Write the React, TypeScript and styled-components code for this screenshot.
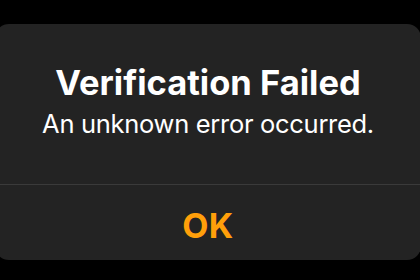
import React from "react";
import styled, { createGlobalStyle } from "styled-components";

const Global = createGlobalStyle`
  html, body { margin: 0; padding: 0; background: #000; }
  body { width: 420px; height: 280px; overflow: hidden; font-family: Inter, "Noto Sans", sans-serif; }
`;

const Page = styled.div`
  width: 420px;
  height: 280px;
  background: #000;
  padding-top: 24px;
  box-sizing: border-box;
  overflow: hidden;
`;

const Alert = styled.div`
  margin-left: -5px;
  width: 426px;
  height: 236px;
  background: #232323;
  border-radius: 14px;
  display: flex;
  flex-direction: column;
`;

const Body = styled.div`
  height: 161px;
  box-sizing: border-box;
  display: flex;
  flex-direction: column;
  align-items: center;
  padding-top: 38px;
  border-bottom: 1.5px solid #3a3a3a;
`;

const Title = styled.div`
  color: #fff;
  font-weight: 700;
  font-size: 34.5px;
  line-height: 42px;
`;

const Message = styled.div`
  color: #fff;
  font-weight: 400;
  font-size: 25.5px;
  line-height: 34px;
  letter-spacing: -0.3px;
  margin-top: 3px;
`;

const Button = styled.button`
  flex: 1;
  border: 0;
  background: transparent;
  color: #ff9f0a;
  font-family: Inter, "Noto Sans", sans-serif;
  font-weight: 700;
  font-size: 34px;
  letter-spacing: 0.5px;
  display: flex;
  align-items: center;
  justify-content: center;
  padding: 6px 0 0;
`;

export default function App() {
  return (
    <Page>
      <Global />
      <Alert>
        <Body>
          <Title>Verification Failed</Title>
          <Message>An unknown error occurred.</Message>
        </Body>
        <Button>OK</Button>
      </Alert>
    </Page>
  );
}
